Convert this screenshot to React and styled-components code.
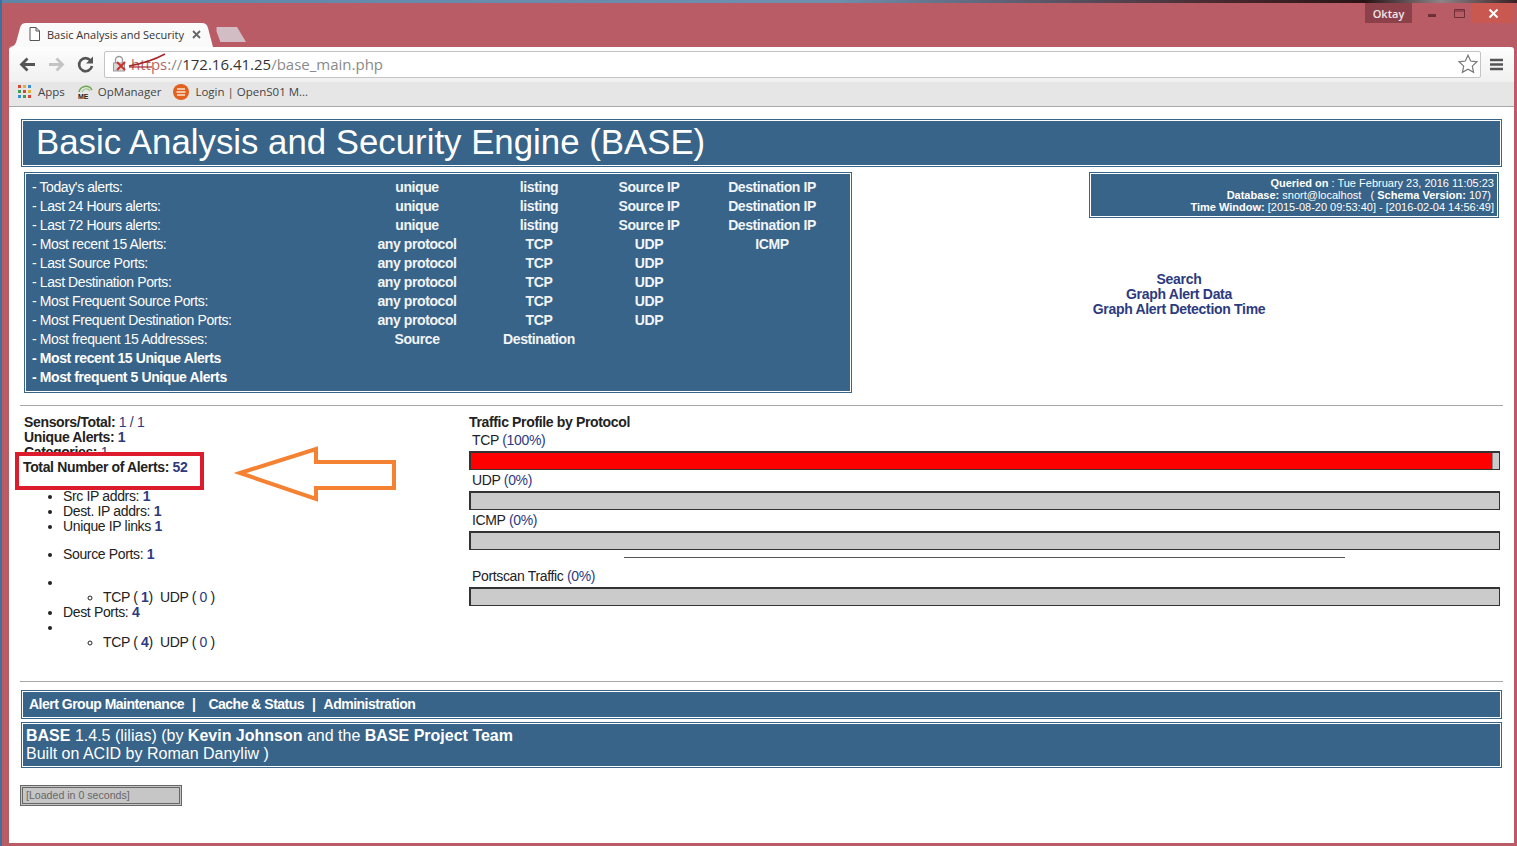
import React from 'react'
import styled, { createGlobalStyle } from 'styled-components'

const blue = '#386489'
const linkBlue = '#2c3a80'
const sans = `'Liberation Sans', Arial, sans-serif`
const ui = `'Open Sans', 'Noto Sans', sans-serif`

const Global = createGlobalStyle`
  html, body { margin: 0; padding: 0; overflow: hidden; background: #b95c66; }
`
const Window = styled.div`
  box-sizing: border-box;
  width: 1517px;
  height: 846px;
  display: flex;
  flex-direction: column;
  background: #b95c66;
  border-left: 2px solid #3d709c;
  padding: 0 3px 3px 7px;
  font-family: ${sans};
  position: relative;
`
const Wallpaper = styled.div`
  flex: none;
  height: 3px;
  margin: 0 -3px 0 -7px;
  background: linear-gradient(to right, #5d86a8 0, #6f8fae 55%, #4a2a30 80%, #2a1416 90%, #8d8488 95%, #3a2024 100%);
`
const TitleBar = styled.div`
  height: 44px;
  display: flex;
  align-items: flex-end;
  flex: none;
`
const Tab = styled.div`
  width: 205px;
  height: 24px;
  display: flex;
  align-items: center;
  gap: 7px;
  box-sizing: border-box;
  padding: 0 13px 2px 20px;
  background: #fafafa;
  clip-path: path('M0 24 C6 24 7 20 8 16 L11 5 C12 1 14 0 18 0 L192 0 C196 0 198 1 199 5 L204 24 Z');
  font: 11px ${ui};
  color: #333;
`
const TabTitle = styled.span`
  flex: 1;
  white-space: nowrap;
`
const NewTab = styled.div`
  width: 32px;
  height: 15px;
  margin: 0 0 5px 0;
  background: #d3bdc4;
  clip-path: polygon(8% 0, 72% 0, 100% 100%, 20% 100%, 8% 30%);
`
const Controls = styled.div`
  margin-left: auto;
  align-self: flex-start;
  display: flex;
  height: 20px;
  align-items: stretch;
`
const UserBadge = styled.div`
  width: 47px;
  display: flex;
  align-items: center;
  justify-content: center;
  background: #8c4049;
  color: #f2e6e8;
  font: 600 11px ${ui};
  margin-right: 7px;
`
const WinButton = styled.div`
  width: ${p => p.$w}px;
  display: flex;
  align-items: center;
  justify-content: center;
  background: ${p => p.$bg || 'transparent'};
`
const Toolbar = styled.div`
  flex: none;
  height: 35px;
  display: flex;
  align-items: center;
  box-sizing: border-box;
  padding: 0 10px 0 8px;
  gap: 8px;
  background: linear-gradient(#fdfdfd, #f0f0f0);
  border-radius: 3px 3px 0 0;
`
const NavIcon = styled.svg`
  width: 21px;
  height: 21px;
  flex: none;
`
const Omnibox = styled.div`
  flex: 1;
  height: 27px;
  box-sizing: border-box;
  display: flex;
  align-items: center;
  background: #fff;
  border: 1px solid #c4c4c4;
  border-radius: 2px;
  padding: 0 1px 2px 6px;
  font: 15px ${ui};
  color: #8a8a8a;
`
const Url = styled.div`
  position: relative;
  margin-left: 2px;
  flex: 1;
  white-space: nowrap;
`
const Https = styled.span`
  color: #b5675e;
`
const Host = styled.span`
  color: #333;
`
const Slash = styled.svg`
  position: absolute;
  left: -3px;
  top: -2px;
`
const Bookmarks = styled.div`
  flex: none;
  height: 25px;
  box-sizing: border-box;
  display: flex;
  align-items: center;
  gap: 12px;
  padding: 0 0 5px 8px;
  background: #e6e6e6;
  border-bottom: 1px solid #a8a8a8;
  font: 11.5px ${ui};
  color: #444;
`
const Bookmark = styled.div`
  display: flex;
  align-items: center;
  gap: ${p => p.$gap || 6}px;
`
const Page = styled.div`
  flex: 1;
  background: #fff;
  padding: 12px 12px 0;
  display: flex;
  flex-direction: column;
  min-height: 0;
`
const Panel = styled.div`
  box-sizing: border-box;
  background: ${blue};
  color: #fff;
  border: 1px solid ${blue};
  box-shadow: inset 0 0 0 1px #fff;
`
const Header = styled(Panel)`
  height: 48px;
  padding-left: 14px;
  font-size: 34.8px;
  line-height: 44px;
  white-space: nowrap;
`
const TopRow = styled.div`
  display: flex;
  justify-content: space-between;
  margin: 5px 3px 0;
`
const Menu = styled(Panel)`
  width: 828px;
  height: 221px;
  padding: 5px 0 0 7px;
  display: grid;
  grid-template-columns: 323px 124px 120px 100px 146px;
  grid-auto-rows: 19px;
  font-size: 14px;
  letter-spacing: -0.4px;
  line-height: 19px;
`
const MenuLabel = styled.div`
  font-weight: ${p => (p.$bold ? 700 : 400)};
  grid-column: ${p => (p.$wide ? '1 / -1' : 'auto')};
  white-space: nowrap;
`
const MenuCell = styled.div`
  font-weight: 700;
  text-align: center;
  color: #f2f5f8;
`
const Side = styled.div`
  width: 410px;
`
const Info = styled(Panel)`
  height: 46px;
  padding: 4px 4px 0 0;
  font-size: 11px;
  line-height: 12px;
  text-align: right;
  white-space: pre;
`
const Links = styled.div`
  width: 180px;
  margin-top: 54px;
  text-align: center;
  font-size: 14px;
  letter-spacing: -0.3px;
  font-weight: 700;
  line-height: 15px;
  color: ${linkBlue};
`
const Rule = styled.div`
  height: 1px;
  background: #a8a8a8;
  margin: ${p => p.$top}px -1px 0;
  flex: none;
`
const Stats = styled.div`
  margin: 9px 2px 0 0;
  display: grid;
  grid-template-columns: 448px 1fr;
  font-size: 14px;
  letter-spacing: -0.35px;
  line-height: 15px;
  color: #222;
`
const Summary = styled.div`
  padding-left: 3px;
  font-weight: 700;
`
const Value = styled.span`
  color: ${linkBlue};
  font-weight: ${p => (p.$bold ? 700 : 400)};
`
const List = styled.ul`
  margin: ${p => p.$top || 13}px 0 0;
  padding-left: 42px;
  list-style: disc;
`
const SubList = styled.ul`
  margin: 0;
  padding-left: 40px;
  list-style: circle;
`
const Spaced = styled.span`
  white-space: pre;
`
const RedBox = styled.div`
  position: absolute;
  left: 13px;
  top: 452px;
  width: 189px;
  height: 38px;
  box-sizing: border-box;
  border: 4px solid #dc1c2c;
  background: #fff;
  padding: 4px 0 0 4px;
  font-size: 14px;
  letter-spacing: -0.35px;
  line-height: 15px;
  font-weight: 700;
  color: #222;
`
const Arrow = styled.svg`
  position: absolute;
  left: 230px;
  top: 443px;
`
const TrafficTitle = styled.div`
  font-weight: 700;
`
const BarLabel = styled.div`
  height: 21px;
  line-height: 21px;
  padding-left: 3px;
`
const Bar = styled.div`
  box-sizing: border-box;
  height: 19px;
  background: #cbcbcb;
  border: 2px solid #333;
  border-right-width: 1px;
  border-bottom-width: 1px;
`
const BarFill = styled.div`
  height: 100%;
  background: #f00;
  border-right: 1px solid #888;
`
const TrafficRule = styled.div`
  width: 70%;
  height: 1px;
  background: #555;
  margin: 7px auto 8px;
`
const Nav = styled(Panel)`
  margin-top: 8px;
  height: 29px;
  padding-left: 7px;
  font-size: 14px;
  letter-spacing: -0.5px;
  font-weight: 700;
  line-height: 27px;
  white-space: pre;
`
const NavSep = styled.span`
  margin: 0 ${p => p.$right}px 0 8px;
`
const Footer = styled(Panel)`
  margin-top: 3px;
  height: 46px;
  padding: 4px 0 0 4px;
  font-size: 16px;
  line-height: 18px;
`
const Loaded = styled.div`
  box-sizing: border-box;
  width: 162px;
  height: 21px;
  margin: 17px 0 0 -1px;
  background: #c6c6c6;
  border: 3px double #666;
  padding-left: 3px;
  font-size: 10.6px;
  line-height: 15px;
  color: #666;
`

const menuRows = [
  ["Today's alerts:", 'unique', 'listing', 'Source IP', 'Destination IP'],
  ['Last 24 Hours alerts:', 'unique', 'listing', 'Source IP', 'Destination IP'],
  ['Last 72 Hours alerts:', 'unique', 'listing', 'Source IP', 'Destination IP'],
  ['Most recent 15 Alerts:', 'any protocol', 'TCP', 'UDP', 'ICMP'],
  ['Last Source Ports:', 'any protocol', 'TCP', 'UDP', ''],
  ['Last Destination Ports:', 'any protocol', 'TCP', 'UDP', ''],
  ['Most Frequent Source Ports:', 'any protocol', 'TCP', 'UDP', ''],
  ['Most Frequent Destination Ports:', 'any protocol', 'TCP', 'UDP', ''],
  ['Most frequent 15 Addresses:', 'Source', 'Destination', '', ''],
]

const bars = [
  { label: 'TCP', pct: 100, width: 99.3 },
  { label: 'UDP', pct: 0, width: 0 },
  { label: 'ICMP', pct: 0, width: 0 },
]

const Ports = ({ tcp, udp }) => (
  <SubList>
    <li>
      <Spaced>TCP ( <Value $bold>{tcp}</Value>)  UDP ( <Value>{udp}</Value> )</Spaced>
    </li>
  </SubList>
)

const TrafficBar = ({ label, pct, width }) => (
  <>
    <BarLabel>{label} <Value>({pct}%)</Value></BarLabel>
    <Bar>{width > 0 && <BarFill style={{ width: `${width}%` }} />}</Bar>
  </>
)

const AppsIcon = () => (
  <svg width="15" height="15" viewBox="0 0 15 15">
    {['#d9453a', '#e0b030', '#3b8ed6', '#3f9e54', '#d9453a', '#e0b030', '#3b8ed6', '#3f9e54', '#d9453a'].map((c, i) => (
      <rect key={i} x={1 + (i % 3) * 5} y={1 + Math.floor(i / 3) * 5} width="3" height="3" fill={c} />
    ))}
  </svg>
)

const MeIcon = () => (
  <svg width="17" height="16" viewBox="0 0 17 16">
    <path d="M2 8 A7 7 0 0 1 15 6" fill="none" stroke="#6aa84f" strokeWidth="1.5" />
    <path d="M5 8 A4.5 4.5 0 0 1 13 7" fill="none" stroke="#9cc48a" strokeWidth="1.2" />
    <text x="1" y="15" fontSize="7" fontWeight="700" fontFamily="Liberation Sans" fill="#222">ME</text>
  </svg>
)

const LoginIcon = () => (
  <svg width="16" height="16" viewBox="0 0 16 16">
    <circle cx="8" cy="8" r="8" fill="#e2611f" />
    <path d="M4 5h8M3.500 8h9M4 11h8" stroke="#fbe3d5" strokeWidth="1.4" />
  </svg>
)

export default function App() {
  return (
    <Window>
      <Global />
      <Wallpaper />
      <TitleBar>
        <Tab>
          <svg width="11" height="14" viewBox="0 0 11 14" style={{ flex: 'none' }}>
            <path d="M1 .5h6l3.500 3.500v9.500h-9.500z M7 .5v3.500h3.500" fill="#fff" stroke="#555" />
          </svg>
          <TabTitle>Basic Analysis and Security</TabTitle>
          <svg width="9" height="9" viewBox="0 0 9 9" style={{ flex: 'none' }}>
            <path d="M1 1l7 7M8 1l-7 7" stroke="#666" strokeWidth="1.800" />
          </svg>
        </Tab>
        <NewTab />
        <Controls>
          <UserBadge>Oktay</UserBadge>
          <WinButton $w={27}>
            <svg width="9" height="9" viewBox="0 0 9 9"><rect y="5" width="8" height="3" fill="#6e2f38" /></svg>
          </WinButton>
          <WinButton $w={26}>
            <svg width="11" height="9" viewBox="0 0 11 9"><path d="M.5 .5h10v8h-10z M.5 2h10" fill="none" stroke="#6e2f38" /></svg>
          </WinButton>
          <WinButton $w={42} $bg="#c85850">
            <svg width="11" height="11" viewBox="0 0 11 11"><path d="M1.500 1.500l8 8M9.500 1.500l-8 8" stroke="#fff" strokeWidth="2" /></svg>
          </WinButton>
        </Controls>
      </TitleBar>
      <Toolbar>
        <NavIcon viewBox="0 0 21 21">
          <path d="M18 10.500H5M10.500 4.500l-6 6 6 6" fill="none" stroke="#555" strokeWidth="2.800" />
        </NavIcon>
        <NavIcon viewBox="0 0 21 21">
          <path d="M3 10.500h13M10.500 4.500l6 6-6 6" fill="none" stroke="#c4c4c4" strokeWidth="2.800" />
        </NavIcon>
        <NavIcon viewBox="0 0 21 21">
          <path d="M16 7a6.500 6.500 0 1 0 1 5" fill="none" stroke="#555" strokeWidth="2.600" />
          <path d="M18 2.500v7h-7z" fill="#555" />
        </NavIcon>
        <Omnibox>
          <svg width="18" height="18" viewBox="0 0 18 18" style={{ flex: 'none' }}>
            <path d="M4.500 8V5a3.500 3.500 0 0 1 7 0v3" fill="none" stroke="#9a9a9a" strokeWidth="1.400" />
            <rect x="2.500" y="8" width="11" height="8" fill="#d8d8d8" stroke="#9a9a9a" />
            <path d="M6 7l8 8M14 7l-8 8" stroke="#c9302c" strokeWidth="2" />
          </svg>
          <Url>
            <Https>https</Https>://<Host>172.16.41.25</Host>/base_main.php
            <Slash width="40" height="22" viewBox="0 0 40 22">
              <path d="M1 14 C12 12 26 8 37 2" fill="none" stroke="#a6292c" strokeWidth="1.500" />
              <path d="M1 15 H24" fill="none" stroke="#a6292c" strokeWidth="1.200" />
            </Slash>
          </Url>
          <svg width="22" height="22" viewBox="0 0 24 24" style={{ flex: 'none' }}>
            <path d="M12 2.500l2.900 6.300 6.900.8-5.100 4.700 1.400 6.800-6.100-3.400-6.100 3.400 1.400-6.800-5.100-4.700 6.900-.8z" fill="#fff" stroke="#777" strokeWidth="1.300" />
          </svg>
        </Omnibox>
        <svg width="15" height="13" viewBox="0 0 15 13" style={{ flex: 'none' }}>
          <path d="M1 2h13M1 6.500h13M1 11h13" stroke="#555" strokeWidth="2.600" />
        </svg>
      </Toolbar>
      <Bookmarks>
        <Bookmark><AppsIcon />Apps</Bookmark>
        <Bookmark $gap={4}><MeIcon />OpManager</Bookmark>
        <Bookmark><LoginIcon />Login | OpenS01 M...</Bookmark>
      </Bookmarks>
      <Page>
        <Header>Basic Analysis and Security Engine (BASE)</Header>
        <TopRow>
          <Menu>
            {menuRows.map(([label, ...cells]) => (
              <React.Fragment key={label}>
                <MenuLabel>- {label}</MenuLabel>
                {cells.map((c, i) => <MenuCell key={i}>{c}</MenuCell>)}
              </React.Fragment>
            ))}
            <MenuLabel $bold $wide>- Most recent 15 Unique Alerts</MenuLabel>
            <MenuLabel $bold $wide>- Most frequent 5 Unique Alerts</MenuLabel>
          </Menu>
          <Side>
            <Info>
              <div><b>Queried on</b> : Tue February 23, 2016 11:05:23</div>
              <div><b>Database:</b> snort@localhost   ( <b>Schema Version:</b> 107) </div>
              <div><b>Time Window:</b> [2015-08-20 09:53:40] - [2016-02-04 14:56:49]</div>
            </Info>
            <Links>
              <div>Search</div>
              <div>Graph Alert Data</div>
              <div>Graph Alert Detection Time</div>
            </Links>
          </Side>
        </TopRow>
        <Rule $top={12} />
        <Stats>
          <div>
            <Summary>
              <div>Sensors/Total: <Value>1</Value> <Value>/</Value> <Value>1</Value></div>
              <div>Unique Alerts: <Value $bold>1</Value></div>
              <div>Categories: <Value>1</Value></div>
              <div>&nbsp;</div>
            </Summary>
            <List $top={14}>
              <li>Src IP addrs: <Value $bold>1</Value></li>
              <li>Dest. IP addrs: <Value $bold>1</Value></li>
              <li>Unique IP links <Value $bold>1</Value></li>
            </List>
            <List>
              <li>Source Ports: <Value $bold>1</Value></li>
            </List>
            <List>
              <li>&nbsp;<Ports tcp={1} udp={0} /></li>
              <li>Dest Ports: <Value $bold>4</Value></li>
              <li>&nbsp;<Ports tcp={4} udp={0} /></li>
            </List>
          </div>
          <div>
            <TrafficTitle>Traffic Profile by Protocol</TrafficTitle>
            {bars.map(b => <TrafficBar key={b.label} {...b} />)}
            <TrafficRule />
            <TrafficBar label="Portscan Traffic" pct={0} width={0} />
          </div>
        </Stats>
        <Rule $top={31} />
        <Nav>
          Alert Group Maintenance<NavSep $right={13}>|</NavSep>
          Cache &amp; Status<NavSep $right={8}>|</NavSep>
          Administration
        </Nav>
        <Footer>
          <div><b>BASE</b> 1.4.5 (lilias) (by <b>Kevin Johnson</b> and the <b>BASE Project Team</b></div>
          <div>Built on ACID by Roman Danyliw )</div>
        </Footer>
        <Loaded>[Loaded in 0 seconds]</Loaded>
      </Page>
      <RedBox>Total Number of Alerts: <Value $bold>52</Value></RedBox>
      <Arrow width="170" height="66" viewBox="0 0 170 66">
        <path d="M8 30 L84 6 V19 H162 V45 H84 V56 Z" fill="none" stroke="#f58233" strokeWidth="4" />
      </Arrow>
    </Window>
  )
}
